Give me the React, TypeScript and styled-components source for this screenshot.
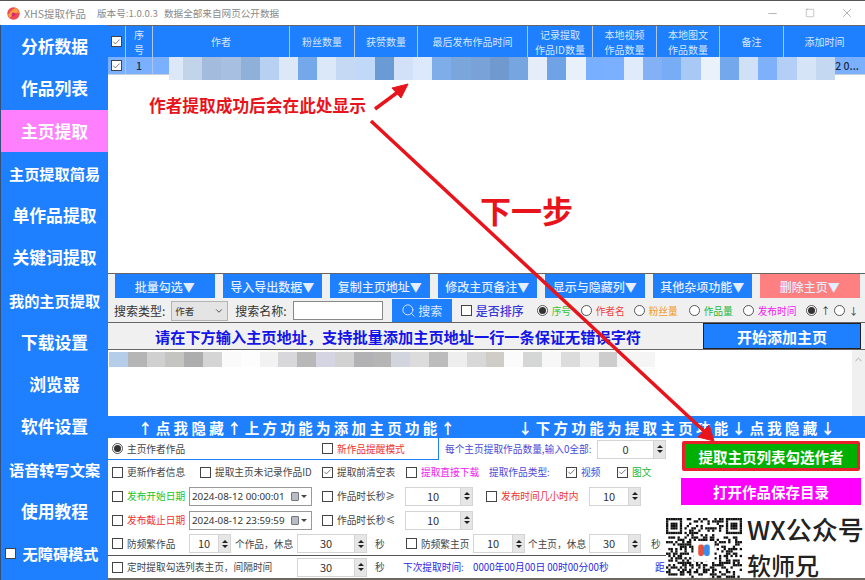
import React from "react";
import styled, { createGlobalStyle } from "styled-components";
import { Check, ChevronDown, ChevronUp, Minus, Search, Square, X } from "lucide-react";

const BLUE = "#1e80ff";
const CJK = `"Noto Sans CJK SC", "Noto Sans", sans-serif`;

const GlobalStyle = createGlobalStyle`
  html, body {
    margin: 0;
    width: 865px;
    height: 580px;
    overflow: hidden;
    background: #fff;
  }
  * {
    box-sizing: border-box;
  }
`;

const NAV = ["分析数据", "作品列表", "主页提取", "主页提取简易", "单作品提取", "关键词提取", "我的主页提取", "下载设置", "浏览器", "软件设置", "语音转写文案", "使用教程"];

const COLUMNS = [
  { w: 65, t: "粉丝数量" },
  { w: 63, t: "获赞数量" },
  { w: 110, t: "最后发布作品时间" },
  { w: 65, t: "记录提取\n作品ID数量" },
  { w: 64, t: "本地视频\n作品数量" },
  { w: 63, t: "本地图文\n作品数量" },
  { w: 64, t: "备注" },
  { w: 81, t: "添加时间" },
];

const ROW_MOSAIC = ["#dce8f8", "#c2d4ea", "#a3bcdd", "#a7c0e2", "#8fb0d8", "#b8d0f2", "#dce8f8", "#74a8ea", "#dbe8fa", "#c5d9f5", "#c2d8f8", "#6a9bd5", "#d2e1f7", "#dce8fb", "#7fadea", "#7ba6db", "#78a2d8", "#7099d0", "#77a5e0", "#e4edf9", "#70a3e5", "#e8f0fa", "#78b0ff", "#7ab0ff", "#dfeafa", "#82b2f5", "#78acf5", "#a8c9f5", "#eaf1fb", "#74a8ec", "#cfe0f7", "#7eb1fa", "#b4cff5", "#d6e4f8", "#c4d8f2"];
const URL_MOSAIC = ["#b5cde8", "#b5b5b5", "#d0d0d0", "#c4c4c2", "#adadad", "#d5d5d5", "#fafafa", "#fdfdfd", "#f2f2f2", "#d8d8da", "#b8b8b8", "#d4d4e2", "#d2d2d2", "#b2b2b5", "#b5b5b5", "#d2d4de", "#dcdcdc", "#bcbcbc", "#eeeeee", "#d8d8d8", "#d0ccc8", "#fbfbfb", "#d5d7d6", "#f7f7f7", "#dcdcdc", "#f0f0f0", "#cdcdcd", "#f5f5f5", "#f5f5f5"];

const TOOLS = ["批量勾选▼", "导入导出数据▼", "复制主页地址▼", "修改主页备注▼", "显示与隐藏列▼", "其他杂项功能▼", "删除主页▼"];

const SORTS = [
  { w: 44, t: "序号", c: "#35c435", on: true },
  { w: 53, t: "作者名", c: "#f03c3c" },
  { w: 55, t: "粉丝量", c: "#f09a28" },
  { w: 54, t: "作品量", c: "#22b83c" },
  { w: 63, t: "发布时间", c: "#f020f0" },
  { w: 28, t: "↑", c: "#333", on: true },
  { w: 22, t: "↓", c: "#333" },
];

const Window = styled.div`
  width: 865px;
  height: 580px;
  position: relative;
  display: flex;
  flex-direction: column;
  overflow: hidden;
  font-family: ${CJK};
  background: #fff;
  border-top: 1px solid #555;
`;

const TitleBar = styled.header`
  height: 24px;
  flex: none;
  display: flex;
  align-items: center;
  padding-left: 7px;
  color: #8a8a8a;
`;

const TitleText = styled.span<{ $w: number; $size: number }>`
  width: ${(p) => p.$w}px;
  flex: none;
  font-size: ${(p) => p.$size}px;
  white-space: nowrap;
`;

const WindowButtons = styled.div`
  margin-left: auto;
  display: flex;
  align-items: center;
  color: #777;
`;

const WindowButton = styled.span`
  width: 37px;
  display: flex;
  justify-content: center;
`;

const Body = styled.div`
  flex: 1;
  min-height: 0;
  display: flex;
`;

const Sidebar = styled.nav`
  width: 108px;
  flex: none;
  display: flex;
  flex-direction: column;
  background: ${BLUE};
  border-left: 1px solid #33507a;
`;

const NavItem = styled.div<{ $active?: boolean; $small?: boolean }>`
  height: 42.25px;
  flex: none;
  display: flex;
  align-items: center;
  justify-content: center;
  gap: 7px;
  color: #fff;
  font-size: ${(p) => (p.$small ? 15.2 : 16.8)}px;
  font-weight: 700;
  background: ${(p) => (p.$active ? "#ff80ff" : "transparent")};
`;

const AccessItem = styled(NavItem)`
  padding-right: 6px;
`;

const Main = styled.main`
  flex: 1;
  min-width: 0;
  display: flex;
  flex-direction: column;
  border-top: 1px solid #666;
`;

const TableArea = styled.section`
  height: 247px;
  flex: none;
  background: #fff;
`;

const HeaderRow = styled.div`
  height: 31px;
  display: flex;
  background: ${BLUE};
`;

const HeaderCell = styled.div<{ $w: number }>`
  width: ${(p) => p.$w}px;
  flex: none;
  display: flex;
  align-items: center;
  justify-content: center;
  text-align: center;
  white-space: pre-line;
  color: #d6e6ff;
  font-size: 10px;
  line-height: 15px;
  border-right: 1px solid #b4c6dc;
  &:last-child {
    border-right: 0;
  }
`;

const DataRow = styled.div`
  position: relative;
  height: 18px;
  display: flex;
  background: #7ab0ff;
  border-bottom: 1px solid #c6cfda;
`;

const DataCell = styled.div<{ $w: number }>`
  width: ${(p) => p.$w}px;
  flex: none;
  display: flex;
  align-items: center;
  justify-content: center;
  color: #1c2c44;
  font-size: 10.5px;
  font-weight: 500;
  border-right: 1px solid #a9c6ee;
`;

const RowMosaic = styled.div`
  position: absolute;
  left: 61px;
  top: 0;
  width: 666px;
  height: 23px;
  display: flex;
  & > i:first-child {
    flex: 0 0 14px;
  }
`;

const LastCell = styled.span`
  position: absolute;
  right: 6px;
  top: 1px;
  color: #1c2c44;
  font-size: 10.5px;
  font-weight: 500;
`;

const Pixel = styled.i<{ $c: string }>`
  flex: 1;
  background: ${(p) => p.$c};
`;

const Toolbar = styled.div`
  height: 26px;
  flex: none;
  display: flex;
  align-items: flex-start;
  gap: 8px;
  padding-left: 7px;
  background: #f0f0f0;
  border-top: 1px solid #666;
`;

const ToolButton = styled.div<{ $danger?: boolean }>`
  width: 99.5px;
  height: 24px;
  display: flex;
  align-items: center;
  justify-content: center;
  color: #e4eeff;
  font-size: 12px;
  font-weight: 500;
  background: ${(p) => (p.$danger ? "#ff8080" : BLUE)};
`;

const SearchRow = styled.div`
  height: 23px;
  flex: none;
  display: flex;
  align-items: center;
  padding-left: 6px;
  background: #f0f0f0;
  color: #333;
  font-size: 12px;
`;

const SearchLabel = styled.span<{ $ml?: number }>`
  margin-left: ${(p) => p.$ml || 0}px;
  white-space: nowrap;
`;

const SelectBox = styled.div`
  width: 57px;
  height: 20px;
  margin-left: 6px;
  display: flex;
  align-items: center;
  justify-content: space-between;
  padding: 0 3px;
  font-size: 9.5px;
  color: #333;
  background: #e4e4e4;
  border: 1px solid #b4b4b4;
`;

const NameInput = styled.div`
  width: 90px;
  height: 19px;
  margin-left: 6px;
  background: #fff;
  border: 1px solid #888;
`;

const SearchButton = styled.div`
  width: 60px;
  height: 23px;
  margin-left: 9px;
  display: flex;
  align-items: center;
  justify-content: center;
  gap: 2px;
  color: #dce9ff;
  background: ${BLUE};
  font-size: 12px;
`;

const SortGroup = styled.div`
  margin-left: 9px;
  display: flex;
  align-items: center;
`;

const SortLabel = styled.span`
  width: 61px;
  margin-left: 4px;
  color: #3838d8;
  font-size: 12px;
  font-weight: 500;
`;

const SortSlot = styled.div<{ $w: number; $c: string }>`
  width: ${(p) => p.$w}px;
  flex: none;
  display: flex;
  align-items: center;
  gap: 4px;
  color: ${(p) => p.$c};
  font-size: 9.7px;
  white-space: nowrap;
`;

const BannerRow = styled.div`
  height: 28px;
  flex: none;
  display: flex;
  align-items: center;
  background: #f0f0f0;
  border-top: 1px solid #666;
  border-bottom: 1px solid #666;
`;

const BannerText = styled.div`
  width: 595px;
  padding-left: 47px;
  color: #1414e6;
  font-size: 15.2px;
  font-weight: 700;
  white-space: nowrap;
`;

const AddButton = styled.div`
  width: 158px;
  height: 26px;
  display: flex;
  align-items: center;
  justify-content: center;
  color: #fff;
  font-size: 15px;
  font-weight: 700;
  background: ${BLUE};
  border: 1px solid #222;
`;

const UrlArea = styled.div`
  height: 66px;
  flex: none;
  display: flex;
  justify-content: space-between;
  padding: 2px 0 0 1px;
  background: #fff;
`;

const UrlMosaic = styled.div`
  width: 546px;
  height: 15px;
  display: flex;
`;

const Scrollbar = styled.div`
  width: 13px;
  margin-top: -2px;
  display: flex;
  justify-content: center;
  padding-top: 4px;
  color: #a8a8a8;
  background: #f0f0f0;
`;

const HideBar = styled.div`
  height: 22px;
  flex: none;
  display: flex;
  align-items: center;
  background: ${BLUE};
  color: #fff;
  font-size: 14.5px;
  font-weight: 700;
  white-space: nowrap;
`;

const HideText = styled.span<{ $w: number; $ml: number }>`
  width: ${(p) => p.$w}px;
  margin-left: ${(p) => p.$ml}px;
  flex: none;
  letter-spacing: 3.3px;
`;

const OptionsPanel = styled.div`
  flex: 1;
  min-height: 0;
  display: flex;
  background: #fff;
  border-bottom: 2px solid #6d675f;
`;

const OptionsLeft = styled.div`
  width: 558px;
  flex: none;
  display: flex;
  flex-direction: column;
`;

const OptionRow = styled.div<{ $h: number; $line?: boolean }>`
  height: ${(p) => p.$h}px;
  flex: none;
  display: flex;
  align-items: center;
  padding-left: 4px;
  border-bottom: ${(p) => (p.$line ? "1px solid #555" : "0")};
`;

const TopRow = styled.div`
  height: 22px;
  flex: none;
  display: flex;
  align-items: center;
`;

const ModeBox = styled.div`
  width: 331px;
  height: 22px;
  flex: none;
  display: flex;
  align-items: center;
  padding-left: 4px;
  border-right: 1px solid ${BLUE};
  border-bottom: 1px solid ${BLUE};
`;

const Slot = styled.div<{ $w?: number; $c?: string; $ml?: number }>`
  width: ${(p) => (p.$w ? `${p.$w}px` : "auto")};
  margin-left: ${(p) => p.$ml || 0}px;
  flex: none;
  display: flex;
  align-items: center;
  gap: 4px;
  color: ${(p) => p.$c || "#444"};
  font-size: 9.7px;
  white-space: nowrap;
`;

const Box = styled.span`
  width: 11px;
  height: 11px;
  flex: none;
  display: inline-flex;
  align-items: center;
  justify-content: center;
  background: #fff;
  border: 1px solid #444;
  color: #333;
`;

const Radio = styled.span<{ $on?: boolean }>`
  width: 11px;
  height: 11px;
  flex: none;
  display: inline-flex;
  align-items: center;
  justify-content: center;
  background: #fff;
  border: 1px solid #555;
  border-radius: 50%;
  &::after {
    content: "";
    display: ${(p) => (p.$on ? "block" : "none")};
    width: 7px;
    height: 7px;
    border-radius: 50%;
    background: #333;
  }
`;

const SpinBox = styled.div<{ $w: number }>`
  width: ${(p) => p.$w}px;
  height: 19px;
  flex: none;
  display: flex;
  background: #fff;
  border: 1px solid #d4d4d4;
  color: #333;
  font-size: 11px;
`;

const SpinValue = styled.span`
  flex: 1;
  text-align: center;
  line-height: 17px;
`;

const SpinArrows = styled.span`
  width: 12px;
  flex: none;
  display: flex;
  flex-direction: column;
  justify-content: center;
  align-items: center;
  gap: 2px;
  background: #e6e6e6;
  border-left: 1px solid #d4d4d4;
`;

const Tri = styled.i<{ $down?: boolean }>`
  width: 0;
  height: 0;
  border-left: 3px solid transparent;
  border-right: 3px solid transparent;
  border-bottom: ${(p) => (p.$down ? "0" : "3px solid #222")};
  border-top: ${(p) => (p.$down ? "3px solid #222" : "0")};
`;

const DateBox = styled.div`
  width: 123px;
  height: 19px;
  flex: none;
  display: flex;
  align-items: center;
  padding: 0 4px 0 2px;
  color: #333;
  font-size: 9.8px;
  font-family: "Noto Sans", sans-serif;
  background: #fff;
  border: 1px solid #999;
`;

const DateIcon = styled.span`
  width: 8px;
  height: 9px;
  margin-left: auto;
  background: #b8bcc4;
  border: 1px solid #777;
  border-radius: 1px;
`;

const DateArrow = styled.i`
  width: 0;
  height: 0;
  margin-left: 2px;
  border-left: 3px solid transparent;
  border-right: 3px solid transparent;
  border-top: 3px solid #445;
`;

const OptionsRight = styled.aside`
  flex: 1;
  min-width: 0;
  display: flex;
  flex-direction: column;
  padding-top: 3px;
`;

const StartButton = styled.div`
  width: 178px;
  height: 31px;
  margin-left: 16px;
  display: flex;
  align-items: center;
  justify-content: center;
  color: #fff;
  font-size: 14.5px;
  font-weight: 700;
  background: #00b000;
  border: 3px solid #e8202c;
  border-radius: 2px;
`;

const FolderButton = styled.div`
  width: 180px;
  height: 28px;
  margin: 7px 0 0 15px;
  display: flex;
  align-items: center;
  justify-content: center;
  color: #fff;
  font-size: 14.5px;
  font-weight: 700;
  background: #ff00ff;
`;

const Promo = styled.div`
  margin-top: 13px;
  display: flex;
  color: #222;
`;

const PromoText = styled.div`
  margin-left: 5px;
  font-weight: 500;
`;

const PromoLine = styled.div<{ $size: number; $mt?: number }>`
  height: 22px;
  margin-top: ${(p) => p.$mt || 0}px;
  font-size: ${(p) => p.$size}px;
  line-height: 22px;
  white-space: nowrap;
`;

const Callout = styled.div<{ $x: number; $y: number; $size: number }>`
  position: absolute;
  left: ${(p) => p.$x}px;
  top: ${(p) => p.$y}px;
  color: #e8141c;
  font-size: ${(p) => p.$size}px;
  line-height: 1;
  font-weight: 700;
  white-space: nowrap;
`;

const ArrowLayer = styled.svg`
  position: absolute;
  left: 0;
  top: -1px;
  width: 865px;
  height: 580px;
  pointer-events: none;
`;

const CheckBox = ({ on }: { on?: boolean }) => (
  <Box>{on && <Check size={10} strokeWidth={1.8} />}</Box>
);

const Spin = ({ w, v }: { w: number; v: number }) => (
  <SpinBox $w={w}>
    <SpinValue>{v}</SpinValue>
    <SpinArrows>
      <Tri />
      <Tri $down />
    </SpinArrows>
  </SpinBox>
);

const DateField = ({ v }: { v: string }) => (
  <DateBox>
    {v}
    <DateIcon />
    <DateArrow />
  </DateBox>
);

function AppIcon() {
  return (
    <svg width="13" height="13" viewBox="0 0 13 13" style={{ flex: "none", marginRight: 4 }}>
      <circle cx="6.5" cy="6.5" r="6.2" fill="#ee4a55" />
      <path d="M1 8 Q5 2 9 1 Q12 3 12 6 Q7 5 3 11 Z" fill="#f6a13a" />
      <circle cx="6.5" cy="7.5" r="2" fill="#d92a7a" />
    </svg>
  );
}

function isFinder(x: number, y: number, ox: number, oy: number) {
  const dx = x - ox;
  const dy = y - oy;
  if (dx < 0 || dy < 0 || dx > 6 || dy > 6) return false;
  return dx === 0 || dy === 0 || dx === 6 || dy === 6 || (dx >= 2 && dx <= 4 && dy >= 2 && dy <= 4);
}

function QrCode() {
  const size = 33;
  const cells: React.ReactElement[] = [];
  for (let y = 0; y < size; y++) {
    for (let x = 0; x < size; x++) {
      const inZone = (x < 8 && y < 8) || (x > 24 && y < 8) || (x < 8 && y > 24);
      const hash = ((x * 73 + y * 151 + x * y * 17) ^ (x * x * 5 + y * 29)) % 7;
      const dark = inZone
        ? isFinder(x, y, 0, 0) || isFinder(x, y, 26, 0) || isFinder(x, y, 0, 26)
        : hash < 3;
      if (dark) cells.push(<rect key={`${x}-${y}`} x={x} y={y} width="1" height="1" />);
    }
  }
  return (
    <svg width="76" height="60" viewBox="0 0 33 26.05" style={{ flex: "none", display: "block" }}>
      <g fill="#111">{cells}</g>
      <rect x="12" y="10" width="9" height="9" fill="#fff" />
      <rect x="14" y="11.5" width="2.5" height="5" rx="1" fill="#e8503c" />
      <rect x="16.5" y="11.5" width="2.5" height="5" rx="1" fill="#3c8ce8" />
    </svg>
  );
}

export default function App() {
  return (
    <>
      <GlobalStyle />
      <Window>
        <TitleBar>
          <AppIcon />
          <TitleText $w={73} $size={10.5}>XHS提取作品</TitleText>
          <TitleText $w={67} $size={9.6}>版本号:1.0.0.3</TitleText>
          <TitleText $w={120} $size={9.6}>数据全部来自网页公开数据</TitleText>
          <WindowButtons>
            <WindowButton><Minus size={13} strokeWidth={1} /></WindowButton>
            <WindowButton><Square size={10} strokeWidth={1} /></WindowButton>
            <WindowButton><X size={14} strokeWidth={1} /></WindowButton>
          </WindowButtons>
        </TitleBar>
        <Body>
          <Sidebar>
            {NAV.map((n, i) => (
              <NavItem key={n} $active={i === 2} $small={n.length > 5}>{n}</NavItem>
            ))}
            <AccessItem $small>
              <CheckBox />
              无障碍模式
            </AccessItem>
          </Sidebar>
          <Main>
            <TableArea>
              <HeaderRow>
                <HeaderCell $w={18}><CheckBox on /></HeaderCell>
                <HeaderCell $w={27}>{"序\n号"}</HeaderCell>
                <HeaderCell $w={137}>作者</HeaderCell>
                {COLUMNS.map((c) => (
                  <HeaderCell key={c.t} $w={c.w}>{c.t}</HeaderCell>
                ))}
              </HeaderRow>
              <DataRow>
                <DataCell $w={18}><CheckBox on /></DataCell>
                <DataCell $w={27}>1</DataCell>
                <RowMosaic>
                  {ROW_MOSAIC.map((c, i) => <Pixel key={i} $c={c} />)}
                </RowMosaic>
                <LastCell>2 0...</LastCell>
              </DataRow>
            </TableArea>
            <Toolbar>
              {TOOLS.map((t, i) => (
                <ToolButton key={t} $danger={i === 6}>{t}</ToolButton>
              ))}
            </Toolbar>
            <SearchRow>
              <SearchLabel>搜索类型:</SearchLabel>
              <SelectBox>作者<ChevronDown size={10} /></SelectBox>
              <SearchLabel $ml={7}>搜索名称:</SearchLabel>
              <NameInput />
              <SearchButton><Search size={15} strokeWidth={1.5} />搜索</SearchButton>
              <SortGroup>
                <CheckBox />
                <SortLabel>是否排序</SortLabel>
              </SortGroup>
              {SORTS.map((s) => (
                <SortSlot key={s.t} $w={s.w} $c={s.c}>
                  <Radio $on={s.on} />
                  {s.t}
                </SortSlot>
              ))}
            </SearchRow>
            <BannerRow>
              <BannerText>请在下方输入主页地址，支持批量添加主页地址一行一条保证无错误字符</BannerText>
              <AddButton>开始添加主页</AddButton>
            </BannerRow>
            <UrlArea>
              <UrlMosaic>
                {URL_MOSAIC.map((c, i) => <Pixel key={i} $c={c} />)}
              </UrlMosaic>
              <Scrollbar><ChevronUp size={11} /></Scrollbar>
            </UrlArea>
            <HideBar>
              <HideText $w={320} $ml={30}>↑点我隐藏↑上方功能为添加主页功能↑</HideText>
              <HideText $w={320} $ml={60}>↓下方功能为提取主页功能↓点我隐藏↓</HideText>
            </HideBar>
            <OptionsPanel>
              <OptionsLeft>
                <TopRow>
                  <ModeBox>
                    <Slot $w={210}><Radio $on />主页作者作品</Slot>
                    <Slot $c="#f03030"><CheckBox />新作品提醒模式</Slot>
                  </ModeBox>
                  <Slot $w={152} $ml={6} $c="#4a4ad8">每个主页提取作品数量,输入0全部:</Slot>
                  <Spin w={69} v={0} />
                </TopRow>
                <OptionRow $h={24}>
                  <Slot $w={88}><CheckBox />更新作者信息</Slot>
                  <Slot $w={122}><CheckBox />提取主页未记录作品ID</Slot>
                  <Slot $w={84}><CheckBox on />提取前清空表</Slot>
                  <Slot $w={83} $c="#f020f0"><CheckBox />提取直接下载</Slot>
                  <Slot $w={77} $c="#4a4ad8">提取作品类型:</Slot>
                  <Slot $w={51} $c="#4a4ad8"><CheckBox on />视频</Slot>
                  <Slot $c="#22b83c"><CheckBox on />图文</Slot>
                </OptionRow>
                <OptionRow $h={24}>
                  <Slot $w={77} $c="#22c422"><CheckBox />发布开始日期</Slot>
                  <Slot $w={133}><DateField v="2024-08-12 00:00:01" /></Slot>
                  <Slot $w={83}><CheckBox />作品时长秒≥</Slot>
                  <Slot $w={81}><Spin w={68} v={10} /></Slot>
                  <Slot $w={103} $c="#f03030"><CheckBox />发布时间几小时内</Slot>
                  <Spin w={52} v={10} />
                </OptionRow>
                <OptionRow $h={24}>
                  <Slot $w={77} $c="#f03030"><CheckBox />发布截止日期</Slot>
                  <Slot $w={133}><DateField v="2024-08-12 23:59:59" /></Slot>
                  <Slot $w={83}><CheckBox />作品时长秒≤</Slot>
                  <Spin w={68} v={10} />
                </OptionRow>
                <OptionRow $h={24} $line>
                  <Slot $w={77}><CheckBox />防频繁作品</Slot>
                  <Spin w={42} v={10} />
                  <Slot $w={62} $ml={4}>个作品，休息</Slot>
                  <Spin w={70} v={30} />
                  <Slot $w={31} $ml={8}>秒</Slot>
                  <Slot $w={67}><CheckBox />防频繁主页</Slot>
                  <Spin w={52} v={10} />
                  <Slot $w={61} $ml={3}>个主页，休息</Slot>
                  <Spin w={52} v={30} />
                  <Slot $ml={10}>秒</Slot>
                </OptionRow>
                <OptionRow $h={22}>
                  <Slot $w={185}><CheckBox />定时提取勾选列表主页，间隔时间</Slot>
                  <Spin w={70} v={30} />
                  <Slot $w={28} $ml={8}>秒</Slot>
                  <Slot $w={70} $c="#2a2ae0">下次提取时间:</Slot>
                  <Slot $w={182} $c="#2a2ae0">0000年00月00日 00时00分00秒</Slot>
                  <Slot $c="#2a2ae0">距</Slot>
                </OptionRow>
              </OptionsLeft>
              <OptionsRight>
                <StartButton>提取主页列表勾选作者</StartButton>
                <FolderButton>打开作品保存目录</FolderButton>
                <Promo>
                  <QrCode />
                  <PromoText>
                    <PromoLine $size={26}>WX公众号</PromoLine>
                    <PromoLine $size={24} $mt={14}>软师兄</PromoLine>
                  </PromoText>
                </Promo>
              </OptionsRight>
            </OptionsPanel>
          </Main>
        </Body>
        <ArrowLayer viewBox="0 0 865 580">
          <g fill="#e8141c" stroke="#e8141c">
            <line x1="375" y1="109" x2="398" y2="92" strokeWidth="3.5" />
            <polygon points="408,84 392,88 401,98" />
            <line x1="371" y1="121" x2="704" y2="431" strokeWidth="3.5" />
            <polygon points="714,441 698,437 709,425" />
          </g>
        </ArrowLayer>
        <Callout $x={149} $y={96} $size={16.7}>作者提取成功后会在此处显示</Callout>
        <Callout $x={480} $y={193} $size={31}>下一步</Callout>
      </Window>
    </>
  );
}
